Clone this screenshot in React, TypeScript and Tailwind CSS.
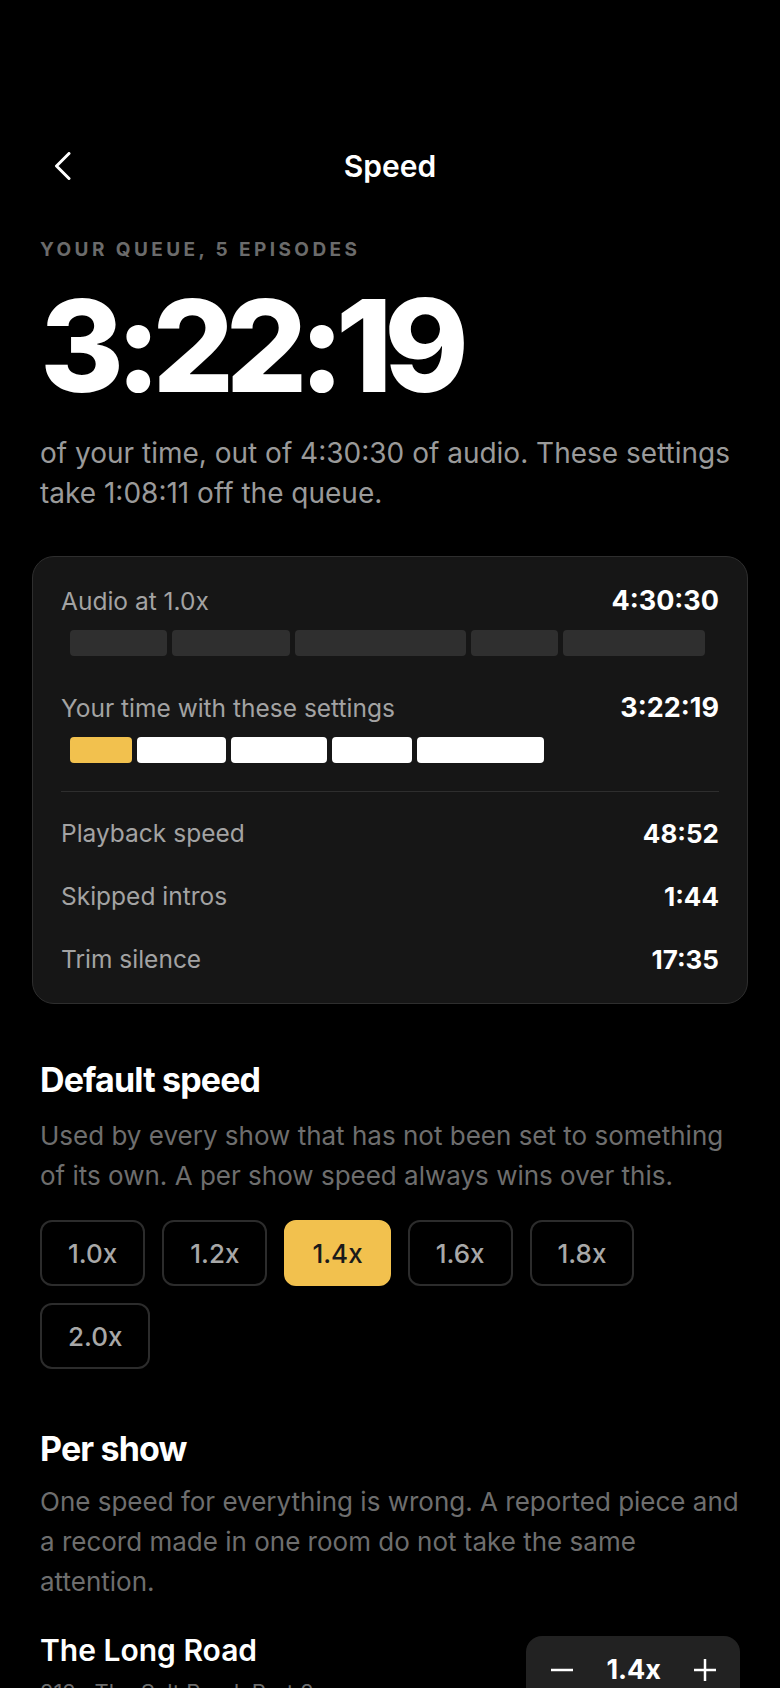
const audioSegments = ['w-[97px]', 'w-[118px]', 'w-[171px]', 'w-[87px]', 'w-[142px]'];
const timeSegments = ['w-[62px]', 'w-[89px]', 'w-[96px]', 'w-[80px]', 'w-[127px]'];

const savings = [
  { label: 'Playback speed', value: '48:52' },
  { label: 'Skipped intros', value: '1:44' },
  { label: 'Trim silence', value: '17:35' },
];

const speeds = ['1.0x', '1.2x', '1.4x', '1.6x', '1.8x', '2.0x'];

const shows = [
  { title: 'The Long Road', episode: '212 · The Salt Road, Part 2', speed: '1.4x' },
  { title: 'Night Desk', episode: '88 · Letters from the coast', speed: '1.0x' },
];

function BackIcon() {
  return (
    <svg width="18" height="28" viewBox="0 0 18 28" fill="none">
      <path d="M15 1.5L2.5 14L15 26.5" stroke="white" strokeWidth="3" strokeLinecap="round" strokeLinejoin="round" />
    </svg>
  );
}

function StepIcon({ plus }: { plus?: boolean }) {
  return (
    <svg width="22" height="22" viewBox="0 0 22 22" fill="none">
      <path d="M0 11H22" stroke="white" strokeWidth="2.5" />
      {plus && <path d="M11 0V22" stroke="white" strokeWidth="2.5" />}
    </svg>
  );
}

export default function App() {
  const selected = '1.4x';

  return (
    <div className="min-h-[1688px] bg-black font-['Inter','Noto_Sans',sans-serif] text-white">
      <div className="px-10 pt-[138px] pb-16">
        <header className="relative flex h-14 items-center justify-center">
          <button className="absolute left-[14px] top-[14px]">
            <BackIcon />
          </button>
          <h1 className="text-[30px] font-semibold">Speed</h1>
        </header>

        <p className="mt-[44px] text-[19px] font-bold uppercase leading-6 tracking-[0.18em] text-[#6b6b6b]">
          Your queue, 5 episodes
        </p>
        <div className="mt-5 text-[128px] font-extrabold leading-none tracking-[-0.065em]">3:22:19</div>
        <p className="mt-[23px] text-[28px] leading-10 text-[#9a9a9a]">
          of your time, out of 4:30:30 of audio. These settings take 1:08:11 off the queue.
        </p>

        <div className="-mx-2 mt-[43px] rounded-[22px] border border-[#2e2e2e] bg-[#161616] p-7">
          <div className="flex h-8 items-center justify-between">
            <span className="text-[24.5px] text-[#a3a3a3]">Audio at 1.0x</span>
            <span className="text-[27px] font-bold">4:30:30</span>
          </div>
          <div className="ml-[9px] mt-[13px] flex gap-[5px]">
            {audioSegments.map((w, i) => (
              <div key={i} className={`${w} h-[26px] rounded-[4px] bg-[#2f2f2f]`} />
            ))}
          </div>

          <div className="mt-9 flex h-8 items-center justify-between">
            <span className="text-[24.5px] text-[#a3a3a3]">Your time with these settings</span>
            <span className="text-[27px] font-bold">3:22:19</span>
          </div>
          <div className="ml-[9px] mt-[13px] flex gap-[5px]">
            {timeSegments.map((w, i) => (
              <div
                key={i}
                className={`${w} h-[26px] rounded-[4px] ${i === 0 ? 'bg-[#f2c14e]' : 'bg-white'}`}
              />
            ))}
          </div>

          <div className="mt-7 h-px bg-[#2e2e2e]" />

          <div className="flex flex-col gap-[31px] pt-[25px]">
            {savings.map((row) => (
              <div key={row.label} className="flex h-8 items-center justify-between">
                <span className="text-[24.5px] text-[#a3a3a3]">{row.label}</span>
                <span className="text-[26px] font-bold">{row.value}</span>
              </div>
            ))}
          </div>
        </div>

        <h2 className="mt-[52px] text-[34px] font-bold leading-[48px] tracking-tight">Default speed</h2>
        <p className="mt-3 text-[26px] leading-10 text-[#6e6e6e]">
          Used by every show that has not been set to something of its own. A per show speed always wins over
          this.
        </p>
        <div className="mt-6 flex flex-wrap gap-[17px]">
          {speeds.map((s) => (
            <button
              key={s}
              className={`h-[66px] rounded-[12px] border-2 px-[26px] text-[26px] font-medium ${
                s === selected
                  ? 'border-[#f2c14e] bg-[#f2c14e] text-[#1a1a1a]'
                  : 'border-[#2c2c2c] text-[#a8a8a8]'
              }`}
            >
              {s}
            </button>
          ))}
        </div>

        <h2 className="mt-[56px] text-[34px] font-bold leading-[48px] tracking-tight">Per show</h2>
        <p className="mt-[9px] text-[26px] leading-10 text-[#6e6e6e]">
          One speed for everything is wrong. A reported piece and a record made in one room do not take the same
          attention.
        </p>

        <div className="mt-[30px] flex flex-col gap-8">
          {shows.map((show) => (
            <div key={show.title} className="flex items-start justify-between">
              <div className="flex flex-col gap-2">
                <span className="text-[30px] font-semibold leading-9">{show.title}</span>
                <span className="text-[22px] text-[#6e6e6e]">{show.episode}</span>
              </div>
              <div className="mt-1 flex h-[68px] items-center gap-[33px] rounded-[16px] bg-[#222] pl-[25px] pr-6">
                <StepIcon />
                <span className="text-[27px] font-bold">{show.speed}</span>
                <StepIcon plus />
              </div>
            </div>
          ))}
        </div>
      </div>
    </div>
  );
}
